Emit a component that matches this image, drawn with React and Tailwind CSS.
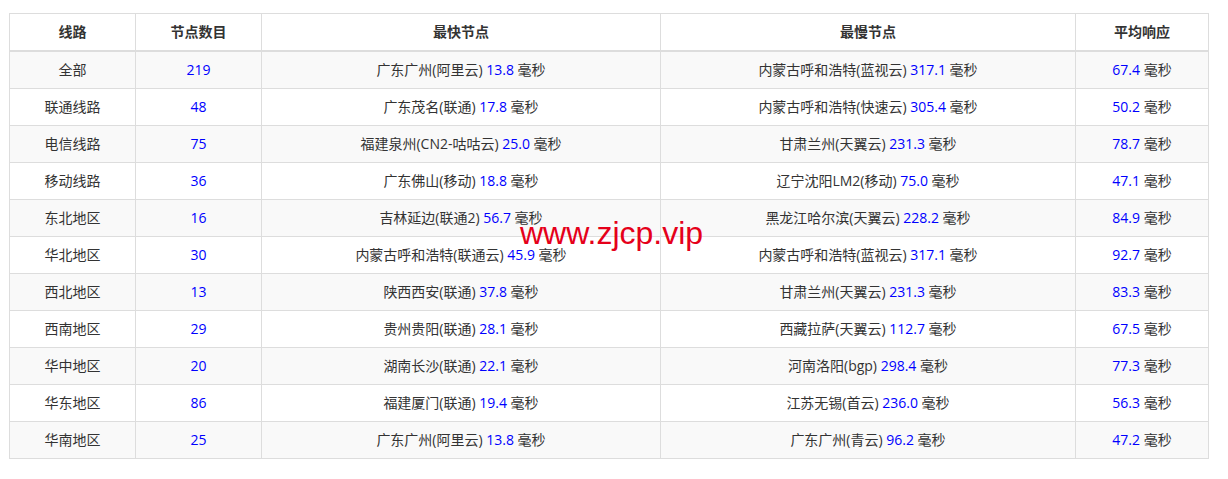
import React from "react";

const rows = [
  ["全部", "219", "广东广州(阿里云)", "13.8", "内蒙古呼和浩特(蓝视云)", "317.1", "67.4"],
  ["联通线路", "48", "广东茂名(联通)", "17.8", "内蒙古呼和浩特(快速云)", "305.4", "50.2"],
  ["电信线路", "75", "福建泉州(CN2-咕咕云)", "25.0", "甘肃兰州(天翼云)", "231.3", "78.7"],
  ["移动线路", "36", "广东佛山(移动)", "18.8", "辽宁沈阳LM2(移动)", "75.0", "47.1"],
  ["东北地区", "16", "吉林延边(联通2)", "56.7", "黑龙江哈尔滨(天翼云)", "228.2", "84.9"],
  ["华北地区", "30", "内蒙古呼和浩特(联通云)", "45.9", "内蒙古呼和浩特(蓝视云)", "317.1", "92.7"],
  ["西北地区", "13", "陕西西安(联通)", "37.8", "甘肃兰州(天翼云)", "231.3", "83.3"],
  ["西南地区", "29", "贵州贵阳(联通)", "28.1", "西藏拉萨(天翼云)", "112.7", "67.5"],
  ["华中地区", "20", "湖南长沙(联通)", "22.1", "河南洛阳(bgp)", "298.4", "77.3"],
  ["华东地区", "86", "福建厦门(联通)", "19.4", "江苏无锡(首云)", "236.0", "56.3"],
  ["华南地区", "25", "广东广州(阿里云)", "13.8", "广东广州(青云)", "96.2", "47.2"],
];

const headers = ["线路", "节点数目", "最快节点", "最慢节点", "平均响应"];

const cell = "flex items-center justify-center h-[36px] pb-px border-r border-[#dddddd] whitespace-nowrap";

const Ms = ({ value }) => (
  <>
    <span className="text-[#0000ff]">{value}</span> 毫秒
  </>
);

const App = () => {
  return (
    <div
      className="relative min-h-[479px] bg-white pt-[13px] pl-[9px] text-[14px] text-[#333333]"
      style={{ fontFamily: '"Open Sans", "Noto Sans CJK SC", sans-serif' }}
    >
      <div className="w-[1200px] border-l border-t border-[#dddddd]">
        {/* header */}
        <div className="grid grid-cols-[126px_126px_399px_415px_133px] border-b-2 border-[#dddddd]">
          {headers.map((h) => (
            <div key={h} className={`${cell} font-bold`}>
              {h}
            </div>
          ))}
        </div>

        {/* body */}
        {rows.map((r, i) => (
          <div
            key={r[0]}
            className={`grid grid-cols-[126px_126px_399px_415px_133px] border-b border-[#dddddd] ${
              i % 2 === 0 ? "bg-[#f9f9f9]" : "bg-white"
            }`}
          >
            <div className={cell}>{r[0]}</div>
            <div className={`${cell} text-[#0000ff]`}>{r[1]}</div>
            <div className={cell}>
              <span>
                {r[2]} <Ms value={r[3]} />
              </span>
            </div>
            <div className={cell}>
              <span>
                {r[4]} <Ms value={r[5]} />
              </span>
            </div>
            <div className={cell}>
              <span>
                <Ms value={r[6]} />
              </span>
            </div>
          </div>
        ))}
      </div>

      {/* watermark */}
      <div
        className="absolute left-[520px] top-[217px] text-[32px] leading-none text-[#e5001a]"
        style={{ fontFamily: '"Liberation Sans", Arial, sans-serif' }}
      >
        www.zjcp.vip
      </div>
    </div>
  );
};

export default App;
